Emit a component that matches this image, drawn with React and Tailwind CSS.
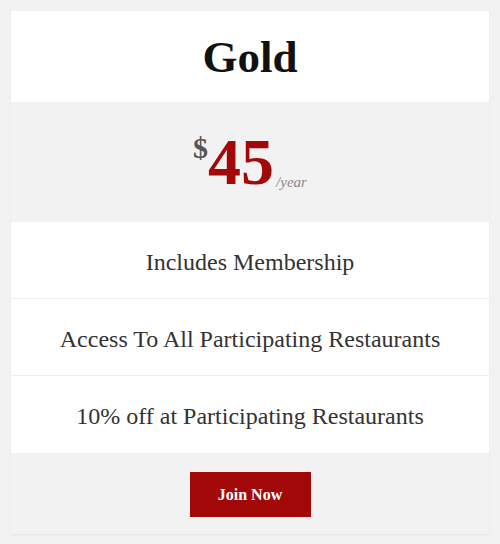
export default function App() {
  const features = [
    "Includes Membership",
    "Access To All Participating Restaurants",
    "10% off at Participating Restaurants",
  ];

  return (
    <div className="min-h-[544px] bg-[#f2f2f2] px-[11px] pt-[11px] font-['Liberation_Serif',serif]">
      <div className="flex flex-col bg-white shadow-[0_1px_2px_rgba(0,0,0,0.06)]">
        <div className="h-[91px] flex items-center justify-center pt-[2px]">
          <h1 className="text-[45px] font-bold text-[#111] leading-none">Gold</h1>
        </div>

        <div className="h-[120px] bg-[#f2f2f2] flex items-center justify-center">
          <div className="flex items-start">
            <span className="text-[30px] font-bold text-[#555] leading-none mt-[4px]">$</span>
            <span className="text-[66px] font-bold text-[#a30808] leading-none">45</span>
            <span className="text-[15px] italic text-[#888] self-end mb-[2px] ml-[2px]">/year</span>
          </div>
        </div>

        {features.map((f, i) => (
          <div
            key={f}
            className={`h-[77px] flex items-center justify-center pt-[3px] text-[24px] text-[#333] ${i < features.length - 1 ? "border-b border-[#eee]" : ""}`}
          >
            {f}
          </div>
        ))}

        <div className="h-[81px] bg-[#f2f2f2] flex items-center justify-center pt-[2px]">
          <button className="w-[121px] h-[45px] bg-[#a30808] text-white font-bold text-[16px]">
            Join Now
          </button>
        </div>
      </div>
    </div>
  );
}
